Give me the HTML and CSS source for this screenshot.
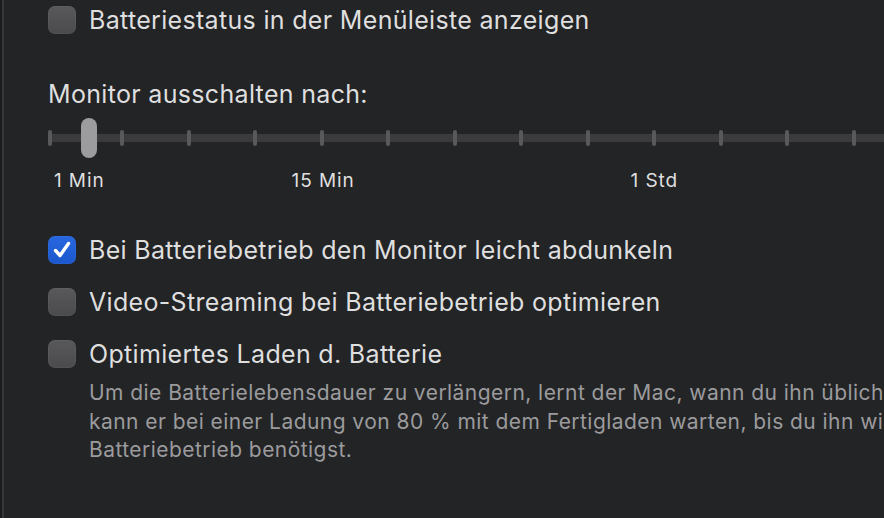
FILE: index.html
```html
<!DOCTYPE html>
<html lang="de">
<head>
<meta charset="utf-8">
<link rel="stylesheet" href="styles.css">
</head>
<body>
<div class="window">
  <div class="pane">
    <label class="row row-first">
      <span class="box"></span>
      <span class="text">Batteriestatus in der Menüleiste anzeigen</span>
    </label>

    <div class="heading">Monitor ausschalten nach:</div>

    <div class="slider">
      <div class="track"></div>
      <div class="ticks">
        <span class="tick"></span><span class="tick"></span><span class="tick"></span><span class="tick"></span><span class="tick"></span><span class="tick"></span><span class="tick"></span><span class="tick"></span><span class="tick"></span><span class="tick"></span><span class="tick"></span><span class="tick"></span><span class="tick"></span>
      </div>
      <div class="thumb"></div>
    </div>

    <div class="scale">
      <span class="lbl lbl-1">1 Min</span>
      <span class="lbl lbl-15">15 Min</span>
      <span class="lbl lbl-std">1 Std</span>
    </div>

    <label class="row row-gap-top">
      <span class="box checked">
        <svg viewBox="0 0 28 28" width="28" height="28"><path d="M7.5 14.5 L12 19.5 L20.5 7.5" fill="none" stroke="#ffffff" stroke-width="3.4" stroke-linecap="round" stroke-linejoin="round"/></svg>
      </span>
      <span class="text">Bei Batteriebetrieb den Monitor leicht abdunkeln</span>
    </label>

    <label class="row row-next">
      <span class="box"></span>
      <span class="text">Video-Streaming bei Batteriebetrieb optimieren</span>
    </label>

    <label class="row row-next">
      <span class="box"></span>
      <span class="text">Optimiertes Laden d. Batterie</span>
    </label>

    <div class="desc">
      <div class="line">Um die Batterielebensdauer zu verlängern, lernt der Mac, wann du ihn üblicherweise auflädst. So</div>
      <div class="line">kann er bei einer Ladung von 80 % mit dem Fertigladen warten, bis du ihn wieder im</div>
      <div class="line">Batteriebetrieb benötigst.</div>
    </div>
  </div>
</div>
</body>
</html>
```

FILE: styles.css
```css
html, body {
  margin: 0;
  padding: 0;
  background: #232426;
  width: 884px;
  height: 518px;
  overflow: hidden;
}

body {
  font-family: Inter, "Helvetica Neue", "Liberation Sans", sans-serif;
  color: #dfdfdf;
}

.window {
  height: 518px;
  border-left: 2px solid #1c1c1e;
  box-sizing: border-box;
}

.pane {
  height: 518px;
  border-left: 2px solid #38383a;
  padding-left: 44px;
  box-sizing: border-box;
  overflow: hidden;
}

.row {
  display: flex;
  align-items: center;
  height: 28px;
  white-space: nowrap;
}

.row-first { margin-top: 6px; }
.row-gap-top { margin-top: 44px; }
.row-next { margin-top: 24px; }

.box {
  flex: none;
  width: 28px;
  height: 28px;
  border-radius: 7px;
  background: linear-gradient(#59595b, #4b4b4d);
  box-shadow: inset 0 0 0 1px rgba(255,255,255,0.04);
  display: flex;
  align-items: center;
  justify-content: center;
}

.box.checked {
  background: linear-gradient(#2767e0, #1b57cc);
}

.text {
  margin-left: 13px;
  font-size: 25px;
  letter-spacing: 0.32px;
  line-height: 28px;
}

.heading {
  margin-top: 46px;
  font-size: 25px;
  line-height: 28px;
  letter-spacing: 0.32px;
  white-space: nowrap;
}

.slider {
  position: relative;
  margin-top: 10px;
  height: 40px;
}

.track {
  position: absolute;
  left: 0;
  right: -20px;
  top: 16px;
  height: 8px;
  background: #3b3b3d;
}

.ticks {
  position: absolute;
  left: 0;
  top: 12px;
  display: flex;
  gap: 62.5px;
}

.tick {
  flex: none;
  width: 4px;
  height: 16px;
  border-radius: 2px;
  background: #59595b;
}

.tick:first-child { margin-right: 5.5px; }

.thumb {
  position: absolute;
  left: 33px;
  top: 0;
  width: 16px;
  height: 40px;
  border-radius: 8px;
  background: #9c9c9e;
}

.scale {
  margin-top: 12px;
  height: 22px;
  display: flex;
  font-size: 19px;
  letter-spacing: 0.9px;
  line-height: 22px;
  white-space: nowrap;
}

.lbl-1 { margin-left: 6px; }
.lbl-15 { margin-left: 187px; }
.lbl-std { margin-left: 276px; }

.desc {
  margin-top: 11px;
  margin-left: 41px;
  color: #9b9b9d;
  font-size: 21px;
  letter-spacing: 0.45px;
  line-height: 28.5px;
  white-space: nowrap;
}
```
